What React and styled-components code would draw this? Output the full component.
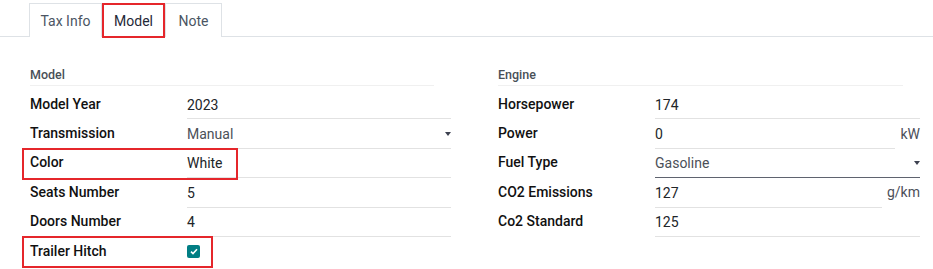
import React from "react";
import styled, { createGlobalStyle, css } from "styled-components";

const Global = createGlobalStyle`
  html, body { margin: 0; padding: 0; background: #fff; }
  body { font-family: Roboto, "Noto Sans", "Liberation Sans", sans-serif; color: #212529; }
`;

const Page = styled.div`
  width: 933px;
  height: 269px;
  overflow: hidden;
`;

const TabBar = styled.div`
  display: flex;
  padding: 3px 0 0 30px;
  border-bottom: 1px solid #dee2e6;
  height: 33px;
`;

const Tab = styled.div`
  position: relative;
  display: flex;
  align-items: center;
  justify-content: center;
  width: ${(p) => p.$w}px;
  box-sizing: border-box;
  height: 34px;
  border: 1px solid #dee2e6;
  border-bottom: none;
  margin-left: -1px;
  background: #fff;
  font-size: 14px;
  color: ${(p) => (p.$active ? "#1f2937" : "#4b5563")};
  ${(p) =>
    p.$marked &&
    css`
      &::after {
        content: "";
        position: absolute;
        left: 0;
        top: -1px;
        right: 0;
        bottom: -1px;
        border: 2px solid #e5262b;
      }
    `}
`;

const Content = styled.div`
  display: grid;
  grid-template-columns: 421px 422px;
  column-gap: 47px;
  padding: 28px 0 0 30px;
`;

const Group = styled.div`
  display: flex;
  flex-direction: column;
`;

const GroupTitle = styled.div`
  font-size: 12.5px;
  font-weight: 500;
  line-height: 20px;
  color: #495057;
  border-bottom: 1px solid #f0f0f0;
  margin-right: 17px;
  margin-bottom: 4px;
`;

const Row = styled.div`
  position: relative;
  display: grid;
  grid-template-columns: 157px 1fr;
  align-items: center;
  height: 29.4px;
  ${(p) =>
    p.$mark &&
    css`
      &::after {
        content: "";
        position: absolute;
        left: -8px;
        top: -1px;
        width: ${p.$mark}px;
        bottom: -2px;
        border: 2px solid #e5262b;
        box-sizing: border-box;
        pointer-events: none;
      }
    `}
`;

const Label = styled.div`
  font-size: 14px;
  font-weight: 500;
  color: #111;
  align-self: center;
  padding-bottom: 2px;
`;

const Field = styled.div`
  display: flex;
  align-items: flex-end;
  height: 100%;
  box-sizing: border-box;
  gap: 5px;
`;

const Input = styled.div`
  flex: 1;
  display: flex;
  align-items: center;
  justify-content: space-between;
  height: 100%;
  box-sizing: border-box;
  padding-top: 1px;
  border-bottom: 1px solid ${(p) => (p.$none ? "transparent" : p.$dark ? "#5f636f" : "#e2e2e2")};
  font-size: 14px;
  color: ${(p) => (p.$muted ? "#4b5058" : "#212529")};
`;

const Unit = styled.span`
  align-self: center;
  font-size: 14px;
  color: #4c4f5a;
  padding-bottom: 1px;
`;

const Caret = styled.span`
  width: 0;
  height: 0;
  border-left: 3.5px solid transparent;
  border-right: 3.5px solid transparent;
  border-top: 4px solid #3d4150;
  margin-right: 0;
`;

const Check = styled.span`
  display: inline-flex;
  align-items: center;
  justify-content: center;
  width: 13px;
  height: 13px;
  border-radius: 2px;
  background: #017e84;
`;

const fields = {
  left: [
    { label: "Model Year", value: "2023" },
    { label: "Transmission", value: "Manual", select: true },
    { label: "Color", value: "White", mark: 216 },
    { label: "Seats Number", value: "5" },
    { label: "Doors Number", value: "4" },
    { label: "Trailer Hitch", check: true, mark: 191 },
  ],
  right: [
    { label: "Horsepower", value: "174" },
    { label: "Power", value: "0", unit: "kW" },
    { label: "Fuel Type", value: "Gasoline", select: true, dark: true },
    { label: "CO2 Emissions", value: "127", unit: "g/km" },
    { label: "Co2 Standard", value: "125" },
  ],
};

function FieldRow({ f }) {
  return (
    <Row $mark={f.mark}>
      <Label>{f.label}</Label>
      <Field>
        {f.check ? (
          <Input $none>
            <Check>
              <svg width="8" height="7" viewBox="0 0 8 7">
                <path d="M1 3.6 L3 5.5 L7 1.3" fill="none" stroke="#fff" strokeWidth="1.6" />
              </svg>
            </Check>
          </Input>
        ) : (
          <Input $muted={f.select} $dark={f.dark}>
            <span>{f.value}</span>
            {f.select && <Caret />}
          </Input>
        )}
        {f.unit && <Unit>{f.unit}</Unit>}
      </Field>
    </Row>
  );
}

export default function App() {
  return (
    <Page>
      <Global />
      <TabBar>
        <Tab $w={73}>Tax Info</Tab>
        <Tab $w={65} $active $marked>Model</Tab>
        <Tab $w={57}>Note</Tab>
      </TabBar>
      <Content>
        <Group>
          <GroupTitle>Model</GroupTitle>
          {fields.left.map((f) => (
            <FieldRow key={f.label} f={f} />
          ))}
        </Group>
        <Group>
          <GroupTitle>Engine</GroupTitle>
          {fields.right.map((f) => (
            <FieldRow key={f.label} f={f} />
          ))}
        </Group>
      </Content>
    </Page>
  );
}
